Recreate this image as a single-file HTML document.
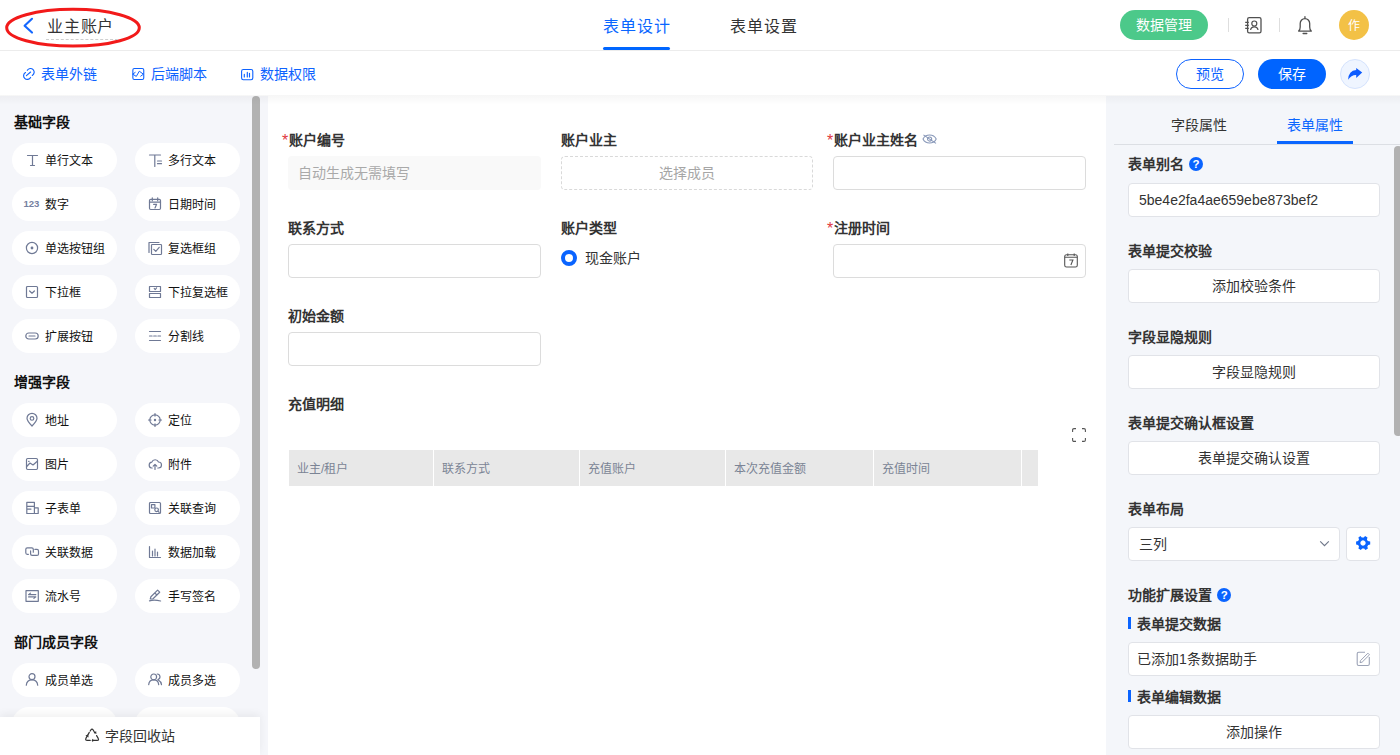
<!DOCTYPE html>
<html lang="zh-CN"><head><meta charset="utf-8"><title>业主账户</title>
<style>
*{box-sizing:border-box}
html,body{margin:0;padding:0}
body{width:1400px;height:755px;overflow:hidden;position:relative;background:#fff;font-family:"Liberation Sans",sans-serif;color:#333}
.a{position:absolute}
.t{position:absolute;white-space:nowrap;line-height:20px}
svg{position:absolute;overflow:visible}
.pill{position:absolute;width:105px;height:34px;border-radius:17px;background:#fff}
.pill .ic{position:absolute;left:13px;top:10px;width:14px;height:14px}
.pill span{position:absolute;left:33px;top:8px;font-size:12px;line-height:20px;color:#111;white-space:nowrap}
.lh{position:absolute;left:14px;font-size:14px;font-weight:bold;line-height:20px;color:#111;white-space:nowrap}
.lbl{position:absolute;font-size:14px;font-weight:bold;line-height:20px;color:#333;white-space:nowrap}
.req{color:#e0393e;font-weight:normal;font-size:16px;margin-right:0.5px;vertical-align:-1px}
.inp{position:absolute;height:34px;border:1px solid #dcdcdc;border-radius:4px;background:#fff}
.btn{position:absolute;left:1128px;width:252px;height:34px;border:1px solid #e1e3e8;border-radius:4px;background:#fff;text-align:center;font-size:14px;line-height:32px;color:#333}
.th{position:absolute;top:450px;height:36px;background:#e8e8e8;font-size:12px;line-height:38px;color:#7b8495;padding-left:8px;white-space:nowrap}
.ico{stroke:#6f7995;fill:none;stroke-width:1.2;stroke-linecap:round;stroke-linejoin:round}
</style></head>
<body>

<!-- ================= HEADER ================= -->
<div class="a" style="left:0;top:0;width:1400px;height:51px;border-bottom:1px solid #ececec;background:#fff"></div>
<svg style="left:0;top:0" width="150" height="50"><ellipse cx="73" cy="27.7" rx="66.3" ry="18.4" fill="none" stroke="#f21a1a" stroke-width="3"/></svg>
<svg style="left:0;top:0" width="40" height="40"><path d="M32 18.8 L24.6 25.7 L32 32.6" fill="none" stroke="#1467ff" stroke-width="2.1" stroke-linecap="round" stroke-linejoin="round"/></svg>
<div class="t" style="left:47px;top:17px;font-size:16px;color:#333;letter-spacing:0.8px">业主账户</div>
<div class="a" style="left:46px;top:39px;width:72px;border-top:1px dashed #cfcfcf"></div>

<div class="t" style="left:603px;top:16.5px;font-size:16px;color:#0a66ff;letter-spacing:1px">表单设计</div>
<div class="a" style="left:603px;top:47px;width:67px;height:3px;border-radius:1.5px;background:#0066ff"></div>
<div class="t" style="left:730px;top:16.5px;font-size:16px;color:#333;letter-spacing:1px">表单设置</div>

<div class="a" style="left:1120px;top:10px;width:88px;height:30px;border-radius:15px;background:#4cc98a;color:#fff;font-size:14px;line-height:30px;text-align:center">数据管理</div>
<div class="a" style="left:1228px;top:18px;width:1px;height:14px;background:#dedede"></div>
<svg style="left:1238px;top:10px" width="40" height="32"><rect x="9.6" y="7.7" width="13.4" height="15.1" rx="1.6" fill="none" stroke="#505050" stroke-width="1.3"/><path d="M7.2 12.3h3.6M7.2 15.3h3.6M7.2 18.3h3.6" stroke="#505050" stroke-width="1.2"/><circle cx="16.3" cy="13.5" r="2.5" fill="none" stroke="#505050" stroke-width="1.2"/><path d="M12.6 20 C13.1 15.9 19.5 15.9 20 20" fill="none" stroke="#505050" stroke-width="1.2"/></svg>
<div class="a" style="left:1279px;top:18px;width:1px;height:14px;background:#dedede"></div>
<svg style="left:1238px;top:10px" width="80" height="32"><path d="M60.6 21.1 Q62.2 20 62.2 17 L62.2 13.6 A4.75 5 0 0 1 71.7 13.6 L71.7 17 Q71.7 20 73.3 21.1 Z" fill="none" stroke="#505050" stroke-width="1.3" stroke-linejoin="round"/><path d="M66.95 6.6v1.4M65.1 23.5h3.7" stroke="#505050" stroke-width="1.3" stroke-linecap="round"/></svg>
<div class="a" style="left:1339px;top:10px;width:30px;height:30px;border-radius:50%;background:#f3c146;color:#fff;font-size:12px;line-height:32.5px;text-align:center">作</div>

<!-- ================= TOOLBAR ================= -->
<svg style="left:19px;top:64px" width="20" height="20"><path d="M8.3 6.3 A3.7 3.7 0 1 1 13.3 11.4 M6.5 8.5 A3.7 3.7 0 1 0 11.6 13.4 M7.4 11.6 L11.6 8" fill="none" stroke="#0d62ff" stroke-width="1.15" stroke-linecap="round"/></svg>
<div class="t" style="left:41px;top:64px;font-size:14px;color:#0d62ff">表单外链</div>
<svg style="left:132px;top:68px" width="13" height="13"><rect x="0.85" y="0.55" width="10.9" height="10.9" rx="1.5" fill="none" stroke="#0d62ff" stroke-width="1.1"/><path d="M3.5 4.2 L0.7 6.2 L4.3 8.4 L7.3 3.2 L11.4 6.2 L8.4 8.4" fill="none" stroke="#0d62ff" stroke-width="1" stroke-linejoin="round"/></svg>
<div class="t" style="left:151px;top:64px;font-size:14px;color:#0d62ff">后端脚本</div>
<svg style="left:241px;top:69px" width="13" height="12"><rect x="0.6" y="0.5" width="11.2" height="10.3" rx="1.7" fill="none" stroke="#0d62ff" stroke-width="1.1"/><path d="M3.3 5.3v2.6M6.3 3.4v4.5M8.5 4.3v3.6" fill="none" stroke="#0d62ff" stroke-width="1.15" stroke-linecap="round"/></svg>
<div class="t" style="left:260px;top:64px;font-size:14px;color:#0d62ff">数据权限</div>

<div class="a" style="left:1176px;top:59px;width:68px;height:30px;border:1px solid #0d62ff;border-radius:15px;color:#0d62ff;font-size:14px;line-height:28px;text-align:center">预览</div>
<div class="a" style="left:1258px;top:59px;width:68px;height:30px;border-radius:15px;background:#0064ff;color:#fff;font-size:14px;line-height:30px;text-align:center">保存</div>
<div class="a" style="left:1340px;top:59px;width:30px;height:30px;border-radius:50%;background:#eff5ff;border:1px solid #d5e3fd"></div>
<svg style="left:1347px;top:66px" width="17" height="15"><path d="M1.1 13.8 Q1.6 4.5 9.2 4 L9.2 1.9 L15.2 6.5 L9.2 11.9 L9.2 9 Q4.3 8.8 1.1 13.8 Z" fill="#0d5cff"/></svg>

<!-- ================= LEFT PANEL ================= -->
<div class="a" id="left" style="left:0;top:96px;width:268px;height:659px;background:#f5f6fa"></div>
<div class="lh" style="top:112px">基础字段</div>
<div class="lh" style="top:372px">增强字段</div>
<div class="lh" style="top:632px">部门成员字段</div>

<!-- PILLS -->
<div class="pill" style="left:12px;top:143px"><svg class="ic ico" width="14" height="14" viewBox="0 0 14 14"><path d="M2.5 2.5h10M7.5 2.5v10M5.5 12.5h4"/></svg><span>单行文本</span></div>
<div class="pill" style="left:135px;top:143px"><svg class="ic ico" width="14" height="14" viewBox="0 0 14 14"><path d="M1.5 2h11M6.8 2v11.5M9.5 8h4M9.5 10.7h4"/></svg><span>多行文本</span></div>
<div class="pill" style="left:12px;top:187px"><svg class="ic ico" width="14" height="14" viewBox="0 0 14 14"><text x="-1.5" y="10" font-size="9.6" font-weight="bold" fill="#7580a0" stroke="none" font-family="Liberation Sans" letter-spacing="-0.1">123</text></svg><span>数字</span></div>
<div class="pill" style="left:135px;top:187px"><svg class="ic ico" width="14" height="14" viewBox="0 0 14 14"><rect x="1.5" y="2.3" width="11" height="10.2" rx="1.2"/><path d="M1.5 5.2h11M4.3 0.8v2.8M9.7 0.8v2.8M5.6 7.3h3l-1.6 3.6"/></svg><span>日期时间</span></div>
<div class="pill" style="left:12px;top:231px"><svg class="ic ico" width="14" height="14" viewBox="0 0 14 14"><circle cx="7" cy="7" r="5.6"/><circle cx="7" cy="7" r="1.4" fill="#6f7995" stroke="none"/></svg><span>单选按钮组</span></div>
<div class="pill" style="left:135px;top:231px"><svg class="ic ico" width="14" height="14" viewBox="0 0 14 14"><path d="M1 11.5V1.5h10"/><rect x="3.5" y="3.5" width="10" height="10" rx="0.8"/><path d="M5.8 8.3 L7.8 10.3 L11.2 6.3"/></svg><span>复选框组</span></div>
<div class="pill" style="left:12px;top:275px"><svg class="ic ico" width="14" height="14" viewBox="0 0 14 14"><rect x="1.5" y="1.5" width="11" height="11" rx="1"/><path d="M4.6 6 L7 8.2 L9.4 6"/></svg><span>下拉框</span></div>
<div class="pill" style="left:135px;top:275px"><svg class="ic ico" width="14" height="14" viewBox="0 0 14 14"><path d="M1.5 1.5h11v5h-11z M1.5 8.5h11v4h-11z"/><path d="M6.2 3.4 L7.2 4.6 L8.6 2.8" stroke-width="1.1"/></svg><span>下拉复选框</span></div>
<div class="pill" style="left:12px;top:319px"><svg class="ic ico" width="14" height="14" viewBox="0 0 14 14"><rect x="0.8" y="4" width="12.4" height="6" rx="3"/><path d="M4 7h6"/></svg><span>扩展按钮</span></div>
<div class="pill" style="left:135px;top:319px"><svg class="ic ico" width="14" height="14" viewBox="0 0 14 14"><path d="M1.5 2.5h11M1.5 11.5h11M1.5 7h2.6M5.7 7h2.6M9.9 7h2.6"/></svg><span>分割线</span></div>
<div class="pill" style="left:12px;top:403px"><svg class="ic ico" width="14" height="14" viewBox="0 0 14 14"><path d="M7 13 C3.5 9.5 2 7.2 2 5.3 A5 5 0 0 1 12 5.3 C12 7.2 10.5 9.5 7 13Z"/><circle cx="7" cy="5.4" r="1.8"/></svg><span>地址</span></div>
<div class="pill" style="left:135px;top:403px"><svg class="ic ico" width="14" height="14" viewBox="0 0 14 14"><circle cx="7" cy="7" r="5.2"/><circle cx="7" cy="7" r="1.2" fill="#6f7995" stroke="none"/><path d="M7 0.5v2.6M7 10.9v2.6M0.5 7h2.6M10.9 7h2.6"/></svg><span>定位</span></div>
<div class="pill" style="left:12px;top:447px"><svg class="ic ico" width="14" height="14" viewBox="0 0 14 14"><rect x="1.5" y="1.5" width="11" height="11" rx="1.2"/><path d="M1.7 9.5 L5 6 L8 8 L12.3 4.2M3.6 4.3h.5"/></svg><span>图片</span></div>
<div class="pill" style="left:135px;top:447px"><svg class="ic ico" width="14" height="14" viewBox="0 0 14 14"><path d="M4.2 11 H3.5 A3 3 0 0 1 3.8 5.1 A3.6 3.6 0 0 1 10.5 5 A3 3 0 0 1 10.5 11 H9.8M7 12.5V7.5M5.2 9.2L7 7.4L8.8 9.2"/></svg><span>附件</span></div>
<div class="pill" style="left:12px;top:491px"><svg class="ic ico" width="14" height="14" viewBox="0 0 14 14"><path d="M1.8 1.3h7.6v11.2h-7.6z M1.8 5.4h7.6 M1.8 8.1h4.2 M9.4 6.8h3.8v5.7h-3.8"/></svg><span>子表单</span></div>
<div class="pill" style="left:135px;top:491px"><svg class="ic ico" width="14" height="14" viewBox="0 0 14 14"><rect x="1.5" y="1.5" width="11" height="11" rx="1"/><rect x="3.5" y="3.6" width="3.4" height="3.4"/><circle cx="8.6" cy="8.8" r="1.8"/><path d="M9.9 10.1L11.2 11.4"/></svg><span>关联查询</span></div>
<div class="pill" style="left:12px;top:535px"><svg class="ic ico" width="14" height="14" viewBox="0 0 14 14"><path d="M3.4 9.3H2.3Q0.8 9.3 0.8 7.8V4.3Q0.8 2.8 2.3 2.8H6.8Q8.3 2.8 8.3 4.3V7.2 M5.6 5.9V9Q5.6 10.4 7.1 10.4H12Q13.5 10.4 13.5 8.9V5.9Q13.5 4.4 12 4.4H9.9"/></svg><span>关联数据</span></div>
<div class="pill" style="left:135px;top:535px"><svg class="ic ico" width="14" height="14" viewBox="0 0 14 14"><path d="M1.5 1.5v11h11M4.5 6v5M7 4v7M9.5 7v4"/></svg><span>数据加载</span></div>
<div class="pill" style="left:12px;top:579px"><svg class="ic ico" width="14" height="14" viewBox="0 0 14 14"><path d="M1 1.7h12.3v10.6h-12.3z M3.6 5.6h7.2 M3.6 5.6l1.9-1.5 M3.6 7.9h7.2l-1.9 1.5"/></svg><span>流水号</span></div>
<div class="pill" style="left:135px;top:579px"><svg class="ic ico" width="14" height="14" viewBox="0 0 14 14"><path d="M2.3 10 L2.9 7.7 L9.6 1.1 L11.7 3.2 L5 9.8 Z M6.7 3.8 L8.9 6"/><path d="M1.5 11.9 Q6 10.3 12.6 12"/></svg><span>手写签名</span></div>
<div class="pill" style="left:12px;top:663px"><svg class="ic ico" width="14" height="14" viewBox="0 0 14 14"><circle cx="7" cy="3.7" r="3"/><path d="M1.3 12.2 C1.6 8.8 4.2 6.9 7 6.9 C9.8 6.9 12.4 8.8 12.7 12.2"/></svg><span>成员单选</span></div>
<div class="pill" style="left:135px;top:663px"><svg class="ic ico" width="14" height="14" viewBox="0 0 14 14"><circle cx="5.7" cy="3.9" r="2.9"/><path d="M0.7 11.6 C1 8.4 3 6.9 5.7 6.9 C8.4 6.9 10.4 8.4 10.7 11.6 M9.2 1 A2.8 2.8 0 0 1 9.9 6.5 M10.3 7 C12.1 7.9 13.2 9.5 13.5 11.6"/></svg><span>成员多选</span></div>
<div class="pill" style="left:12px;top:707px"></div>
<div class="pill" style="left:135px;top:707px"></div>
<!-- /PILLS -->

<div class="a" style="left:252px;top:96px;width:8px;height:573px;border-radius:4px;background:#b2b2b2"></div>
<div class="a" style="left:0;top:717px;width:260px;height:38px;background:#fff;box-shadow:0 -3px 8px rgba(0,0,0,0.06)"></div>
<svg style="left:80px;top:722px" width="24" height="24"><path d="M9.3 10.4 L5.9 16.4 Q5.1 18.4 7.2 18.4 H10.2 M12.3 18.4 H17.2 Q19.2 18.4 18.2 16.4 L16.6 13.6 M14.9 11 L13.2 8 Q12 6.3 10.8 8 L10.2 9" fill="none" stroke="#333" stroke-width="1.2" stroke-linecap="round" stroke-linejoin="round"/><path d="M5.4 13.6 L8.2 12.6 L8.6 15.4 Z M14.3 18.4 L12.2 16.8 L12.2 20 Z M16.4 11.9 L13.8 10.6 L16.2 9.2 Z" fill="#333"/></svg>
<div class="t" style="left:105px;top:726px;font-size:14px;color:#333">字段回收站</div>

<!-- ================= CENTER ================= -->
<!-- CENTER CONTENT -->
<!-- row 1 -->
<div class="lbl" style="left:282px;top:130px"><span class="req">*</span>账户编号</div>
<div class="a" style="left:288px;top:156px;width:253px;height:34px;border-radius:4px;background:#f9f9f9"></div>
<div class="t" style="left:298px;top:162.5px;font-size:14px;color:#a9a9a9">自动生成无需填写</div>
<div class="lbl" style="left:561px;top:130px">账户业主</div>
<div class="a" style="left:561px;top:156px;width:252px;height:34px;border:1px dashed #d9d9d9;border-radius:4px;background:#fff;text-align:center;font-size:14px;line-height:32px;color:#a6a6a6">选择成员</div>
<div class="lbl" style="left:827px;top:130px"><span class="req">*</span>账户业主姓名</div>
<svg style="left:922px;top:134px" width="16" height="11"><path d="M1 5 C3.6 -0.4 11.6 -0.4 14.2 5 C11.6 10.4 3.6 10.4 1 5Z" fill="none" stroke="#8797b8" stroke-width="1.05"/><circle cx="7.6" cy="5" r="2.1" fill="none" stroke="#8797b8" stroke-width="1.05"/><path d="M1.4 0.9 L14 9.4" stroke="#8797b8" stroke-width="1.05"/></svg>
<div class="inp" style="left:833px;top:156px;width:253px"></div>
<!-- row 2 -->
<div class="lbl" style="left:288px;top:218px">联系方式</div>
<div class="inp" style="left:288px;top:244px;width:253px"></div>
<div class="lbl" style="left:561px;top:218px">账户类型</div>
<div class="a" style="left:561px;top:250px;width:16px;height:16px;border-radius:50%;border:4.5px solid #0a64ff;background:#fff"></div>
<div class="t" style="left:585px;top:248px;font-size:14px;color:#333">现金账户</div>
<div class="lbl" style="left:827px;top:218px"><span class="req">*</span>注册时间</div>
<div class="inp" style="left:833px;top:244px;width:253px"></div>
<svg style="left:1064px;top:253px" width="14" height="15"><rect x="0.7" y="1.8" width="12.6" height="12.2" rx="1.8" fill="none" stroke="#555" stroke-width="1.1"/><path d="M0.7 4.2h12.6M3.8 0.5v2.5M10.2 0.5v2.5M5.3 7h3.6l-2 5" fill="none" stroke="#555" stroke-width="1.1"/></svg>
<!-- row 3 -->
<div class="lbl" style="left:288px;top:306px">初始金额</div>
<div class="inp" style="left:288px;top:332px;width:253px"></div>
<!-- subtable -->
<div class="lbl" style="left:288px;top:394px">充值明细</div>
<svg style="left:1072px;top:428px" width="14" height="14"><path d="M0.6 4V2Q0.6 0.6 2 0.6H4M10 0.6h2Q13.4 0.6 13.4 2V4M13.4 10v2Q13.4 13.4 12 13.4H10M4 13.4H2Q0.6 13.4 0.6 12V10" fill="none" stroke="#555" stroke-width="1.1"/></svg>
<div class="th" style="left:289px;width:144px">业主/租户</div>
<div class="th" style="left:434px;width:145px">联系方式</div>
<div class="th" style="left:580px;width:145px">充值账户</div>
<div class="th" style="left:726px;width:147px">本次充值金额</div>
<div class="th" style="left:874px;width:147px">充值时间</div>
<div class="th" style="left:1022px;width:16px"></div>
<!-- /CENTER CONTENT -->

<!-- ================= RIGHT PANEL ================= -->
<div class="a" id="right" style="left:1106px;top:96px;width:294px;height:659px;background:#f4f6fa"></div>
<!-- RIGHT CONTENT -->
<div class="t" style="left:1171px;top:115px;font-size:14px;color:#333">字段属性</div>
<div class="t" style="left:1287px;top:115px;font-size:14px;color:#0a66ff">表单属性</div>
<div class="a" style="left:1114px;top:144px;width:286px;height:1px;background:#dcdfe4"></div>
<div class="a" style="left:1277px;top:141px;width:76px;height:3px;background:#0a66ff"></div>
<div class="a" style="left:1394px;top:146px;width:8px;height:290px;border-radius:4px;background:#b2b2b2"></div>

<div class="lbl" style="left:1128px;top:154px">表单别名</div>
<div class="a" style="left:1189px;top:156.7px;width:14px;height:14px;border-radius:50%;background:#0a64ff;color:#fff;font-size:11.5px;font-weight:bold;line-height:14px;text-align:center">?</div>
<div class="inp" style="left:1128px;top:183px;width:252px;border-color:#e1e3e8"></div>
<div class="t" style="left:1139px;top:190px;font-size:14px;color:#333">5be4e2fa4ae659ebe873bef2</div>

<div class="lbl" style="left:1128px;top:241px">表单提交校验</div>
<div class="btn" style="top:269px">添加校验条件</div>
<div class="lbl" style="left:1128px;top:327px">字段显隐规则</div>
<div class="btn" style="top:355px">字段显隐规则</div>
<div class="lbl" style="left:1128px;top:413px">表单提交确认框设置</div>
<div class="btn" style="top:441px">表单提交确认设置</div>
<div class="lbl" style="left:1128px;top:499px">表单布局</div>
<div class="inp" style="left:1128px;top:527px;width:212px;border-color:#e1e3e8"></div>
<div class="t" style="left:1139px;top:534px;font-size:14px;color:#333">三列</div>
<svg style="left:1319px;top:540px" width="11" height="8"><path d="M1.2 1.3 L5.5 5.6 L9.8 1.3" fill="none" stroke="#6f7789" stroke-width="1.15"/></svg>
<div class="inp" style="left:1346px;top:527px;width:34px;border-color:#e1e3e8"></div>
<svg style="left:1355px;top:535.3px" width="16" height="16" viewBox="0 0 16 16"><path transform="rotate(90 8 8)" fill="#0a64ff" fill-rule="evenodd" d="M6.6 0.8h2.8l0.5 2 1.6 0.9 2-0.6 1.4 2.4-1.5 1.4v1.9l1.5 1.4-1.4 2.4-2-0.6-1.6 0.9-0.5 2H6.6l-0.5-2-1.6-0.9-2 0.6L1.1 10.6l1.5-1.4V7.3L1.1 5.9l1.4-2.4 2 0.6 1.6-0.9z M8 5.3a2.7 2.7 0 1 0 0.01 0z"/></svg>

<div class="lbl" style="left:1128px;top:585px">功能扩展设置</div>
<div class="a" style="left:1217.3px;top:587.5px;width:14px;height:14px;border-radius:50%;background:#0a64ff;color:#fff;font-size:11.5px;font-weight:bold;line-height:14px;text-align:center">?</div>
<div class="a" style="left:1128px;top:617px;width:3px;height:12px;background:#0a64ff"></div>
<div class="lbl" style="left:1137px;top:614px">表单提交数据</div>
<div class="inp" style="left:1128px;top:642px;width:252px;border-color:#e1e3e8"></div>
<div class="t" style="left:1137px;top:649px;font-size:14px;color:#333">已添加1条数据助手</div>
<svg style="left:1348px;top:645px" width="30" height="28"><path d="M17 7.3 H10.7 Q9.2 7.3 9.2 8.8 V19 Q9.2 20.5 10.7 20.5 H19.8 Q21.3 20.5 21.3 19 V12" fill="none" stroke="#9ca3b6" stroke-width="1.1"/><path d="M12 17.6 L12.5 15.6 L19.9 8.2 L21.5 9.8 L14.1 17.2 Z" fill="none" stroke="#9ca3b6" stroke-width="1" stroke-linejoin="round"/></svg>
<div class="a" style="left:1128px;top:690px;width:3px;height:12px;background:#0a64ff"></div>
<div class="lbl" style="left:1137px;top:687px">表单编辑数据</div>
<div class="btn" style="top:715px">添加操作</div>
<!-- /RIGHT CONTENT -->

<!-- toolbar shadow -->
<div class="a" style="left:0;top:95px;width:1400px;height:10px;background:linear-gradient(rgba(0,0,0,0.035),rgba(0,0,0,0))"></div>
</body></html>
